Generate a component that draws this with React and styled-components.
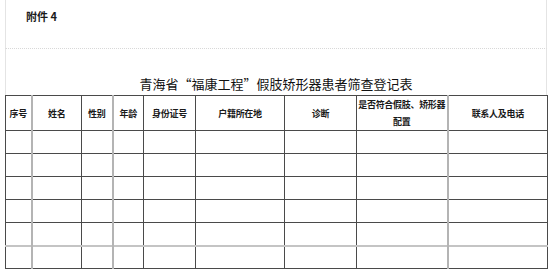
import React from 'react';
import styled, { createGlobalStyle } from 'styled-components';

const GlobalStyle = createGlobalStyle`
  html, body {
    margin: 0;
    padding: 0;
    background: #fff;
  }
  body {
    font-family: "Noto Sans CJK SC", "Noto Sans", sans-serif;
    color: #1a1a1a;
  }
`;

const Sheet = styled.div`
  width: 542px;
  margin-left: 5px;
  display: flex;
  flex-direction: column;
`;

const Top = styled.div`
  height: 49px;
  box-sizing: border-box;
  padding: 9px 0 0 20px;
  border-left: 1px solid #e4e4e4;
  border-right: 1px solid #e4e4e4;
  border-bottom: 1px dotted #d8d8d8;
  font-size: 11px;
  font-weight: 700;
  line-height: 14px;
`;

const TitleBar = styled.div`
  height: 46px;
  box-sizing: border-box;
  display: flex;
  align-items: flex-end;
  justify-content: center;
  padding-bottom: 3px;
  border-left: 1px solid #e4e4e4;
  border-right: 1px solid #e4e4e4;
`;

const Title = styled.h1`
  margin: 0;
  font-size: 13px;
  font-weight: 400;
  line-height: 16px;
  color: #111;
`;

const Table = styled.table`
  width: 542px;
  border-collapse: collapse;
  table-layout: fixed;
`;

const Row = styled.tr`
  height: ${p => p.$h}px;
`;

const Cell = styled.td`
  padding: 0;
  text-align: center;
  vertical-align: middle;
  border: 1px solid #4a4a4a;
  border-left: ${p => (p.$light ? '2px solid #b4b4b4' : '1px solid #4a4a4a')};
  border-top: ${p => (p.$lightTop ? '2px solid #c4c4c4' : '1px solid #4a4a4a')};
`;

const HeadCell = styled(Cell).attrs({ as: 'th' })`
  height: 33px;
  font-size: 9px;
  font-weight: 700;
  line-height: 17px;
  white-space: pre;
  letter-spacing: -0.3px;
  color: #1a1a1a;
  overflow: hidden;
`;

const columns = [
  { label: '序号', w: 26 },
  { label: '姓名', w: 50, light: true },
  { label: '性别', w: 31 },
  { label: '年龄', w: 31, light: true },
  { label: '身份证号', w: 52 },
  { label: '户籍所在地', w: 89 },
  { label: '诊断', w: 72 },
  { label: '是否符合假肢、矫形器\n配置', w: 91 },
  { label: '联系人及电话', w: 100, light: true },
];

const rows = [0, 1, 2, 3, 4, 5];

export default function App() {
  return (
    <>
      <GlobalStyle />
      <Sheet>
        <Top>附件 4</Top>
        <TitleBar>
          <Title lang="zh-CN">青海省“福康工程”假肢矫形器患者筛查登记表</Title>
        </TitleBar>
        <Table>
          <colgroup>
            {columns.map(c => (
              <col key={c.label} style={{ width: c.w }} />
            ))}
          </colgroup>
          <thead>
            <Row $h={35}>
              {columns.map(c => (
                <HeadCell key={c.label} $light={c.light}>
                  {c.label}
                </HeadCell>
              ))}
            </Row>
          </thead>
          <tbody>
            {rows.map(r => (
              <Row key={r} $h={23}>
                {columns.map(c => (
                  <Cell key={c.label} $light={c.light} $lightTop={r === 5} />
                ))}
              </Row>
            ))}
          </tbody>
        </Table>
      </Sheet>
    </>
  );
}
